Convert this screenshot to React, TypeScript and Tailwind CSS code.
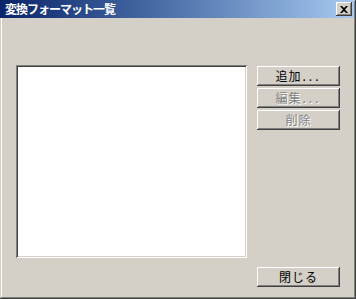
import React from "react";

const raised =
  "shadow-[inset_-1px_-1px_#404040,inset_1px_1px_#ffffff,inset_-2px_-2px_#808080,inset_2px_2px_#d4d0c8]";

function Btn({ label, dots, disabled }: { label: string; dots?: boolean; disabled?: boolean }) {
  return (
    <div
      className={`w-[83px] h-[20px] bg-[#d4d0c8] flex items-center justify-center text-[12px] leading-[12px] tracking-[1px] ${raised} ${
        disabled ? "text-[#808080] [text-shadow:1px_1px_0_#ffffff]" : "text-black"
      }`}
    >
      <span>{label}</span>
      {dots && <span className="tracking-[3px] ml-[1px]">...</span>}
    </div>
  );
}

export default function App() {
  return (
    <div className="w-[356px] h-[299px] bg-[#d4d0c8] flex flex-col font-['Noto_Sans_CJK_JP',sans-serif] shadow-[inset_-1px_-1px_#404040,inset_1px_1px_#d4d0c8,inset_-2px_-2px_#808080,inset_2px_2px_#ffffff]">
      <div className="w-[354px] h-[18px] bg-gradient-to-r from-[#0a246a] to-[#a6caf0] flex items-center pl-[5px] pr-[2px]">
        <span className="text-white font-bold text-[12px] leading-[12px] tracking-[-1px]">変換フォーマット一覧</span>
        <div className={`ml-auto w-[16px] h-[14px] bg-[#d4d0c8] flex items-center justify-center ${raised}`}>
          <svg width="8" height="7" viewBox="0 0 8 7">
            <path d="M0 0h2l2 2 2-2h2L5 3.5 8 7H6L4 5 2 7H0l3-3.5z" fill="#000" />
          </svg>
        </div>
      </div>
      <div className="flex flex-row items-start pl-[16px] pt-[47px]">
        <div className="w-[231px] h-[193px] bg-white shadow-[inset_1px_1px_#808080,inset_-1px_-1px_#ffffff,inset_2px_2px_#404040,inset_-2px_-2px_#d4d0c8]" />
        <div className="ml-[10px] mt-[1px] h-[221px] flex flex-col">
          <div className="flex flex-col gap-[2px]">
            <Btn label="追加" dots />
            <Btn label="編集" dots disabled />
            <Btn label="削除" disabled />
          </div>
          <div className="mt-auto">
            <Btn label="閉じる" />
          </div>
        </div>
      </div>
    </div>
  );
}
